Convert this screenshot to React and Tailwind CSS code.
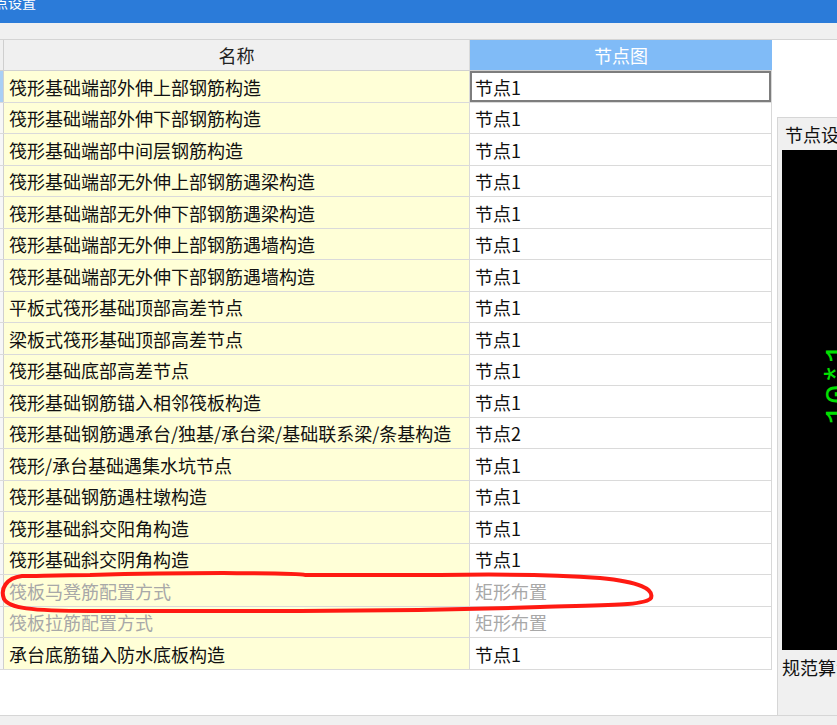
import React from 'react'

const rows = [
  ['筏形基础端部外伸上部钢筋构造', '节点1'],
  ['筏形基础端部外伸下部钢筋构造', '节点1'],
  ['筏形基础端部中间层钢筋构造', '节点1'],
  ['筏形基础端部无外伸上部钢筋遇梁构造', '节点1'],
  ['筏形基础端部无外伸下部钢筋遇梁构造', '节点1'],
  ['筏形基础端部无外伸上部钢筋遇墙构造', '节点1'],
  ['筏形基础端部无外伸下部钢筋遇墙构造', '节点1'],
  ['平板式筏形基础顶部高差节点', '节点1'],
  ['梁板式筏形基础顶部高差节点', '节点1'],
  ['筏形基础底部高差节点', '节点1'],
  ['筏形基础钢筋锚入相邻筏板构造', '节点1'],
  ['筏形基础钢筋遇承台/独基/承台梁/基础联系梁/条基构造', '节点2'],
  ['筏形/承台基础遇集水坑节点', '节点1'],
  ['筏形基础钢筋遇柱墩构造', '节点1'],
  ['筏形基础斜交阳角构造', '节点1'],
  ['筏形基础斜交阴角构造', '节点1'],
  ['筏板马凳筋配置方式', '矩形布置', true],
  ['筏板拉筋配置方式', '矩形布置', true],
  ['承台底筋锚入防水底板构造', '节点1'],
]

function Row({ name, value, disabled, index }) {
  const h = index % 2 === 0 ? 'h-[32px]' : 'h-[31px]'
  const color = disabled ? 'text-[#a8a8a8]' : 'text-[#111]'
  return (
    <div className={`flex ${h} border-b border-[#dadada]`}>
      <div
        className={`w-[4px] shrink-0 border-r border-[#cfcfcf] ${
          index === 0 ? 'bg-[#a9cff5]' : 'bg-[#f7f7f7]'
        }`}
      />
      <div className={`w-[466px] shrink-0 bg-[#ffffd7] border-r border-[#dadada] pl-[5px] flex items-center whitespace-nowrap ${color}`}>
        {name}
      </div>
      <div
        className={`flex-1 bg-white pl-[5px] flex items-center whitespace-nowrap ${color} ${
          index === 0 ? 'outline-2 -outline-offset-2 outline-[#7d7d7d]' : ''
        }`}
      >
        {value}
      </div>
    </div>
  )
}

export default function App() {
  return (
    <div className="relative w-[837px] h-[725px] overflow-hidden bg-white text-[18px] leading-none font-['Noto_Sans_CJK_SC',sans-serif]">
      {/* title bar */}
      <div className="h-[23px] bg-[#2b7bd9] overflow-hidden">
        <div className="-mt-[8px] -ml-[6px] text-white text-[14px] leading-[20px]">点设置</div>
      </div>
      <div className="h-[17px] bg-[#f0f0f0] border-b border-[#d4d4d4]" />

      <div className="flex h-[675px]">
        {/* grid */}
        <div className="w-[772px] shrink-0 flex flex-col">
          <div className="flex h-[31px] border-b border-[#d0d0d0]">
            <div className="w-[4px] shrink-0 bg-[#f0f0f0] border-r border-[#cfcfcf]" />
            <div className="w-[466px] shrink-0 bg-[#f0f0f0] border-r border-[#dadada] flex items-center justify-center text-[#222]">
              名称
            </div>
            <div className="flex-1 bg-[#80bbf7] flex items-center justify-center text-white">节点图</div>
          </div>
          <div className="border-r border-[#d8d8d8]">
            {rows.map((r, i) => (
              <Row key={i} index={i} name={r[0]} value={r[1]} disabled={r[2]} />
            ))}
          </div>
          <div className="flex-1 bg-white" />
        </div>

        {/* right preview panel */}
        <div className="flex-1 flex flex-col">
          <div className="h-[77px] bg-white" />
          <div className="flex-1 ml-[5px] bg-[#f0f0f0] border-l border-t border-[#d6d6d6] flex flex-col">
            <div className="h-[32px] pl-[7px] flex items-center whitespace-nowrap text-[#111]">节点设置</div>
            <div className="relative h-[500px] ml-[4px] bg-black overflow-hidden">
              <div className="absolute left-[16px] top-[217px] -rotate-90 origin-center text-[#00e000] text-[34px] leading-[34px] font-['Liberation_Mono',monospace] whitespace-nowrap">
                10*1
              </div>
            </div>
            <div className="h-[33px] pl-[4px] flex items-center whitespace-nowrap text-[#111]">规范算法</div>
          </div>
        </div>
      </div>

      <div className="h-[10px] bg-[#f0f0f0] border-t border-[#d6d6d6]" />

      {/* red freehand annotation */}
      <svg className="absolute left-0 top-0 pointer-events-none" width="837" height="725">
        <path
          d="M 22 576 C 6 578, 0 589, 4 599 C 9 608, 30 611, 90 611 L 300 611 C 400 611, 480 609, 540 607 C 600 605, 646 606, 651 598 C 654 589, 640 582, 600 578 C 560 575, 500 574, 440 575 L 305 575 C 300 573, 200 572, 90 575 C 60 575, 36 576, 22 576 Z"
          fill="none"
          stroke="#ff1a12"
          strokeWidth="4"
          strokeLinejoin="round"
        />
      </svg>
    </div>
  )
}
